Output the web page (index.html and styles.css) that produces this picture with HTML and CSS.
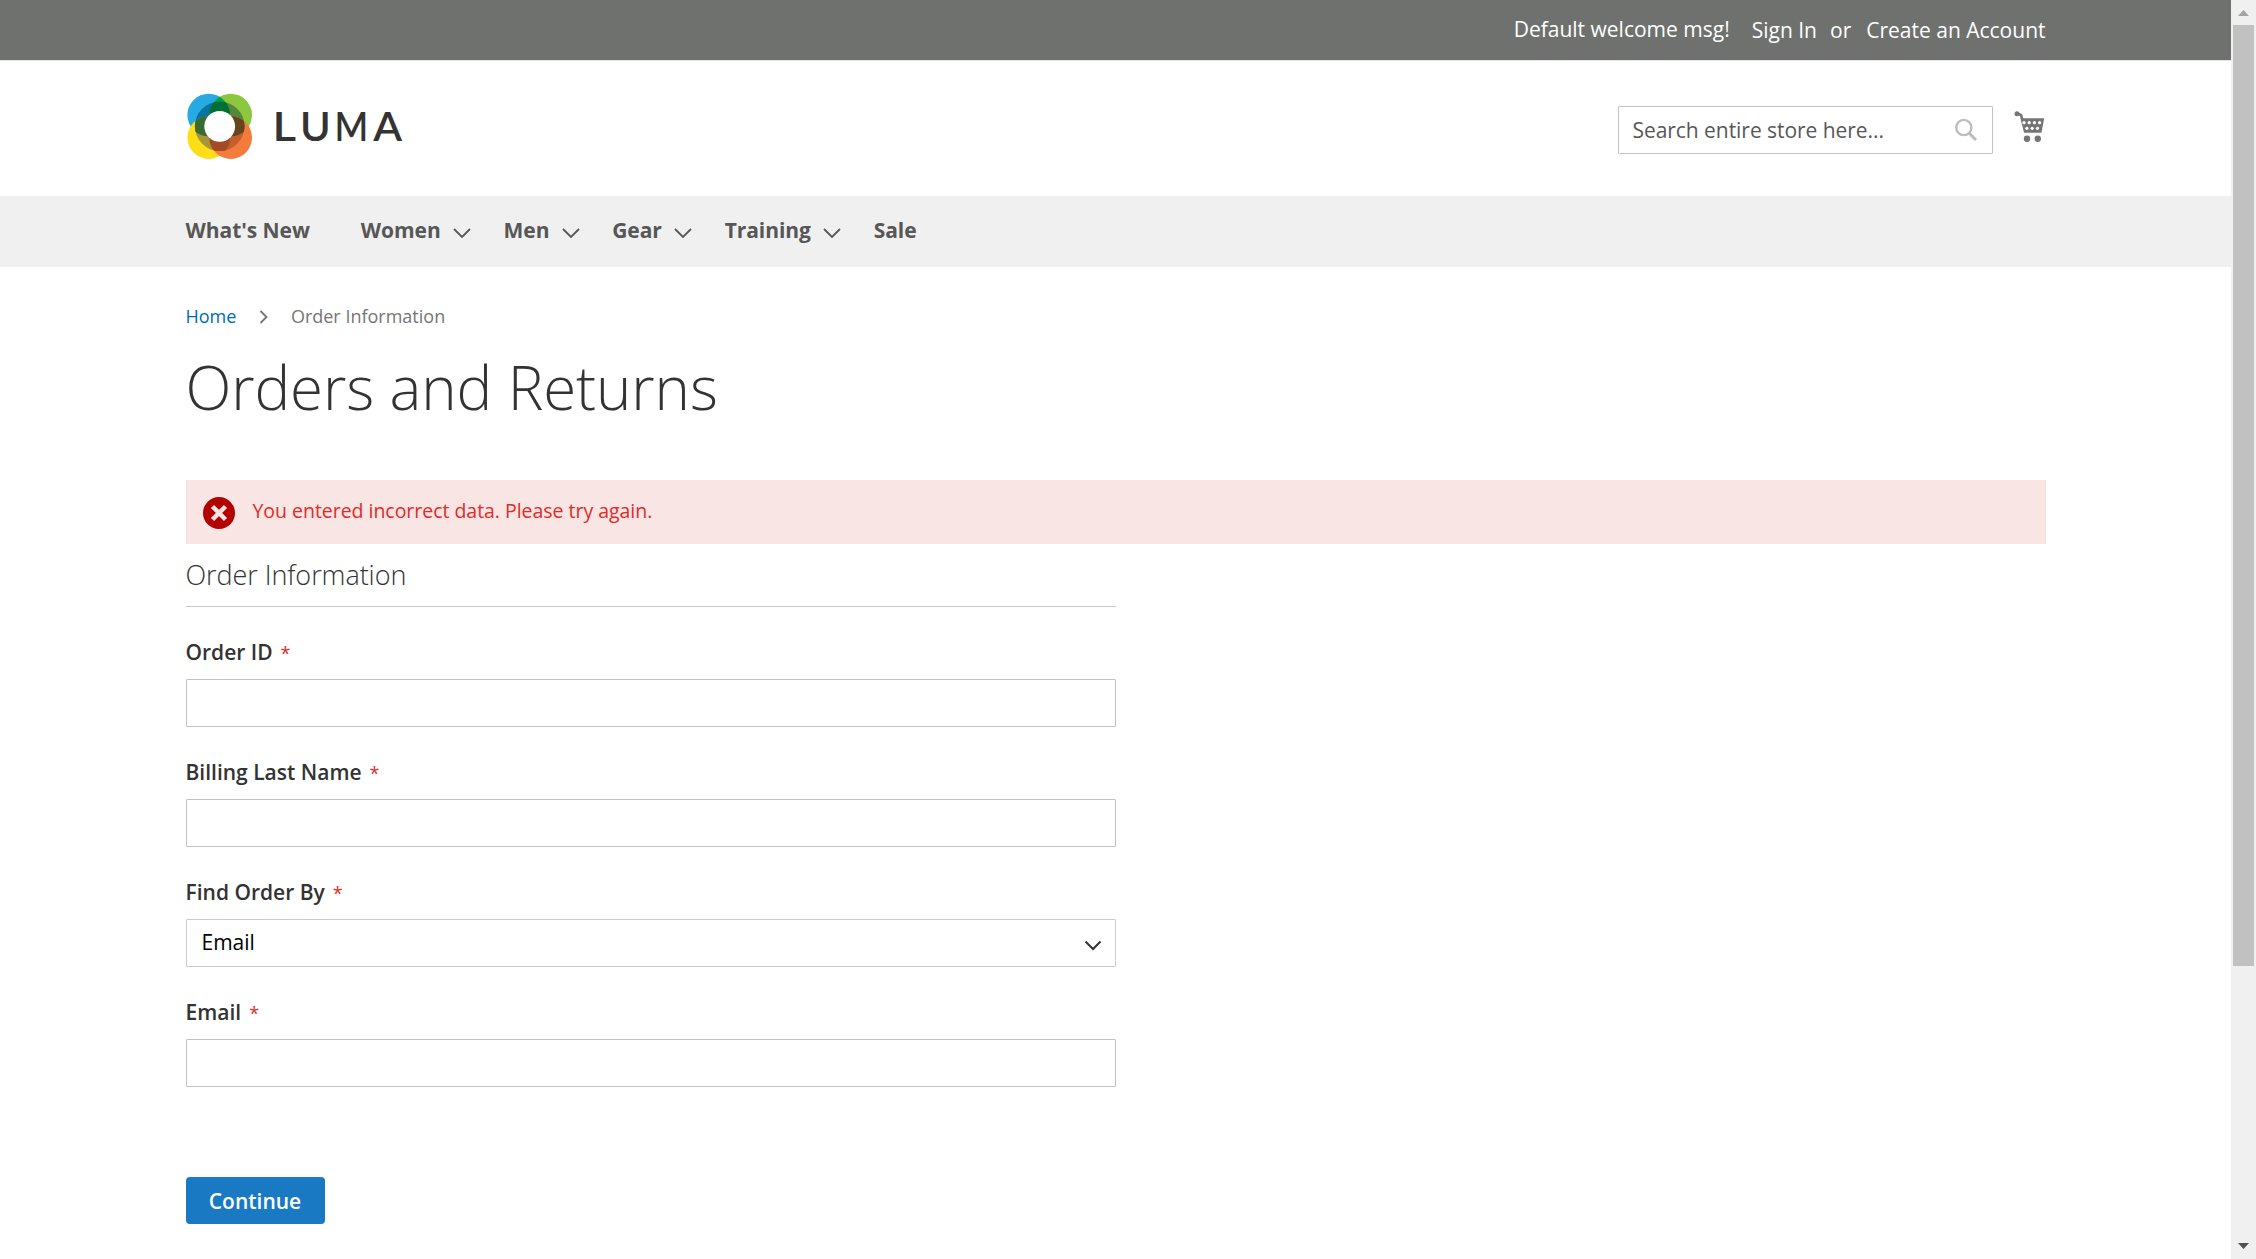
FILE: index.html
```html
<!DOCTYPE html>
<html lang="en">
<head>
<meta charset="utf-8">
<title>Orders and Returns</title>
<link rel="stylesheet" href="styles.css">
</head>
<body>
<div class="page">
  <header>
    <div class="panel">
      <div class="wrap panel-row">
        <span class="welcome">Default welcome msg!</span>
        <a class="signin">Sign In</a>
        <span class="or">or</span>
        <a class="create">Create an Account</a>
      </div>
    </div>
    <div class="wrap brand-row">
      <svg class="logo" width="222" height="70" viewBox="0 0 222 70">
        <defs>
          <clipPath id="ring"><circle cx="33.7" cy="35.3" r="24.8"/></clipPath>
          <clipPath id="tl"><circle cx="22.7" cy="24" r="21.3"/></clipPath>
          <clipPath id="tr"><circle cx="44.7" cy="24" r="21.3"/></clipPath>
          <clipPath id="bl"><circle cx="22.7" cy="46.6" r="21.3"/></clipPath>
        </defs>
        <circle cx="22.7" cy="24" r="21.3" fill="#27aae1"/>
        <circle cx="44.7" cy="24" r="21.3" fill="#8dc63f"/>
        <circle cx="22.7" cy="46.6" r="21.3" fill="#ffde17"/>
        <circle cx="44.7" cy="46.6" r="21.3" fill="#f47b3b"/>
        <g clip-path="url(#tl)"><circle cx="44.7" cy="24" r="21.3" fill="#00a14b"/></g>
        <g clip-path="url(#ring)">
          <circle cx="22.7" cy="24" r="21.3" fill="#08749f"/>
          <circle cx="44.7" cy="24" r="21.3" fill="#56853e"/>
          <circle cx="22.7" cy="46.6" r="21.3" fill="#a8943a"/>
          <circle cx="44.7" cy="46.6" r="21.3" fill="#c25f2e"/>
          <g clip-path="url(#tl)"><circle cx="44.7" cy="24" r="21.3" fill="#007035"/><circle cx="22.7" cy="46.6" r="21.3" fill="#386a31"/></g>
          <g clip-path="url(#tr)"><circle cx="44.7" cy="46.6" r="21.3" fill="#66451e"/></g>
          <g clip-path="url(#bl)"><circle cx="44.7" cy="46.6" r="21.3" fill="#a34a26"/></g>
        </g>
        <circle cx="33.7" cy="35.3" r="15.4" fill="#fff"/>
        <g class="logo-text">
          <text transform="translate(86.5 49.600) scale(1.140 1)">L</text>
          <text transform="translate(114.1 49.600) scale(1.040 1)">U</text>
          <text transform="translate(148.6 49.600) scale(.9 1)">M</text>
          <text transform="translate(187.3 49.600) scale(1.050 1)">A</text>
        </g>
      </svg>
      <div class="tools">
        <label class="search">
          <input type="text" placeholder="Search entire store here...">
          <svg width="24" height="24" viewBox="0 0 24 24"><circle cx="9.800" cy="9.500" r="7.600" fill="none" stroke="#bdbdbd" stroke-width="2.400"/><path d="M15 15l7 7" stroke="#bdbdbd" stroke-width="3"/></svg>
        </label>
        <svg class="cart" width="32" height="32" viewBox="0 0 32 32"><circle cx="3" cy="2.700" r="2.500" fill="#757575"/><path d="M3 2.500l4 1.500 3.500 12" fill="none" stroke="#757575" stroke-width="2.600"/><path d="M6.500 7.300h23.700l-2.700 14.400H10z" fill="#757575"/><g fill="#fff"><circle cx="10" cy="11.700" r="1.600"/><circle cx="15.200" cy="11.700" r="1.600"/><circle cx="20.400" cy="11.700" r="1.600"/><circle cx="25.600" cy="11.700" r="1.600"/><circle cx="12.900" cy="17.300" r="1.600"/><circle cx="18.200" cy="17.300" r="1.600"/><circle cx="23.500" cy="17.300" r="1.600"/></g><circle cx="13" cy="27.800" r="3.200" fill="#757575"/><circle cx="23.800" cy="27.800" r="3.200" fill="#757575"/></svg>
      </div>
    </div>
    <nav>
      <div class="wrap nav-row">
        <a class="plain">What's New</a>
        <a>Women<svg class="chev" viewBox="0 0 18 10"><path d="M1 1l8 8 8-8"/></svg></a>
        <a>Men<svg class="chev" viewBox="0 0 18 10"><path d="M1 1l8 8 8-8"/></svg></a>
        <a>Gear<svg class="chev" viewBox="0 0 18 10"><path d="M1 1l8 8 8-8"/></svg></a>
        <a>Training<svg class="chev" viewBox="0 0 18 10"><path d="M1 1l8 8 8-8"/></svg></a>
        <a>Sale</a>
      </div>
    </nav>
  </header>
  <main class="wrap">
    <div class="crumbs"><a>Home</a><svg width="9" height="14" viewBox="0 0 9 14"><path d="M1.500 1l6 6-6 6"/></svg><span>Order Information</span></div>
    <h1>Orders and Returns</h1>
    <div class="error">
      <svg width="32" height="32" viewBox="0 0 32 32"><circle cx="16" cy="16" r="16" fill="#b30000"/><path d="M9.500 9.500l13 13M22.500 9.500l-13 13" stroke="#fae5e5" stroke-width="4.500"/></svg>
      <span>You entered incorrect data. Please try again.</span>
    </div>
    <form>
      <h2>Order Information</h2>
      <label class="field"><span>Order ID<i>*</i></span><input type="text"></label>
      <label class="field"><span>Billing Last Name<i>*</i></span><input type="text"></label>
      <label class="field"><span>Find Order By<i>*</i></span><div class="select">Email<svg width="18" height="11" viewBox="0 0 18 11"><path d="M1.500 1.500l7.500 7.500 7.500-7.500"/></svg></div></label>
      <label class="field"><span>Email<i>*</i></span><input type="text"></label>
      <button type="button">Continue</button>
    </form>
  </main>
</div>
<div class="scrollbar">
  <svg width="11" height="6" viewBox="0 0 11 6"><path d="M0 6L5.500 0 11 6z" fill="#a3a3a3"/></svg>
  <div class="thumb"></div>
  <svg class="down" width="11" height="6" viewBox="0 0 11 6"><path d="M0 0L5.500 6 11 0z" fill="#505050"/></svg>
</div>
</body>
</html>
```
FILE: styles.css
```css
* { box-sizing: border-box; }
body {
  margin: 0;
  height: 1259px;
  overflow: hidden;
  display: flex;
  font: 400 21px/30px "Open Sans", sans-serif;
  color: #333;
  background: #fff;
}
.page { width: 2231px; }
.wrap { width: 1860px; margin: 0 auto; }
.panel { height: 61px; background: #6e716e; border-bottom: 1px solid #e5e5e5; color: #fff; }
.panel-row { display: flex; justify-content: flex-end; padding-top: 15px; }
.welcome { margin-right: 22px; margin-top: -1px; }
.or { margin: 0 15px 0 13px; }
.brand-row { display: flex; justify-content: space-between; height: 135px; }
.logo { margin-top: 30px; }
.logo-text { font: 600 40px "Lato", sans-serif; fill: #333; }
.tools { display: flex; align-items: flex-start; padding-top: 45px; }
.search {
  display: flex;
  align-items: center;
  width: 375px;
  height: 48px;
  padding: 0 14px 0 14px;
  border: 1px solid #c2c2c2;
  border-radius: 1px;
}
.search input { flex: 1; min-width: 0; padding: 0; border: 0; outline: 0; font: inherit; letter-spacing: -0.05px; }
.search input::placeholder { color: #575757; opacity: 1; }
.cart { margin: 5px 0 0 21px; }
nav { height: 71px; background: #f0f0f0; }
.nav-row { display: flex; gap: 32.5px; padding-top: 19px; font-weight: 700; color: #575757; letter-spacing: -0.05px; }
.plain { margin-right: 18.5px; }
.chev { width: 18px; height: 10px; margin-left: 12.3px; fill: none; stroke: #575757; stroke-width: 1.8; }
.crumbs { display: flex; align-items: center; height: 27px; margin-top: 35px; font-size: 18px; color: #757575; }
.crumbs a { color: #006bb4; }
.crumbs svg { margin: 2px 22.5px 0 23px; fill: none; stroke: #757575; stroke-width: 1.8; }
h1 { margin: 25px 0 0; font-weight: 300; font-size: 60px; line-height: 66px; letter-spacing: -0.1px; }
.error { display: flex; align-items: center; height: 64px; margin-top: 60px; padding-left: 17px; background: #fae5e5; color: #e02b27; font-size: 19.5px; letter-spacing: -0.03px; }
.error svg { margin: 2px 18px 0 0; }
.error span { margin-top: -2px; }
form { width: 930px; }
h2 { height: 63px; margin: 0; padding-top: 15px; border-bottom: 1px solid #c6c6c6; font-weight: 300; font-size: 27px; line-height: 32px; letter-spacing: -0.06px; }
.field { display: block; height: 120px; }
.field > span { display: block; height: 72px; padding-top: 30px; font-weight: 600; }
.field i { margin-left: 8px; font: 400 18px "Open Sans", sans-serif; color: #e02b27; }
.field input, .select { display: flex; width: 100%; height: 48px; border: 1px solid #c2c2c2; border-radius: 1px; }
.select { justify-content: space-between; align-items: center; padding: 0 13px 2px 15px; border-color: #ccc; color: #000; }
.select svg { margin-top: 6px; fill: none; stroke: #333; stroke-width: 2; }
button { display: block; width: 139px; height: 47px; margin-top: 90px; padding: 0; border: 0; border-radius: 4px; background: #1979c3; color: #fff; font: 600 21px "Open Sans", sans-serif; }
.scrollbar { display: flex; flex-direction: column; align-items: center; width: 25px; height: 1259px; padding: 10px 0; background: #f0f0f0; }
.thumb { width: 21px; height: 941px; margin-top: 9px; background: #c1c1c1; }
.down { margin-top: auto; }
```
